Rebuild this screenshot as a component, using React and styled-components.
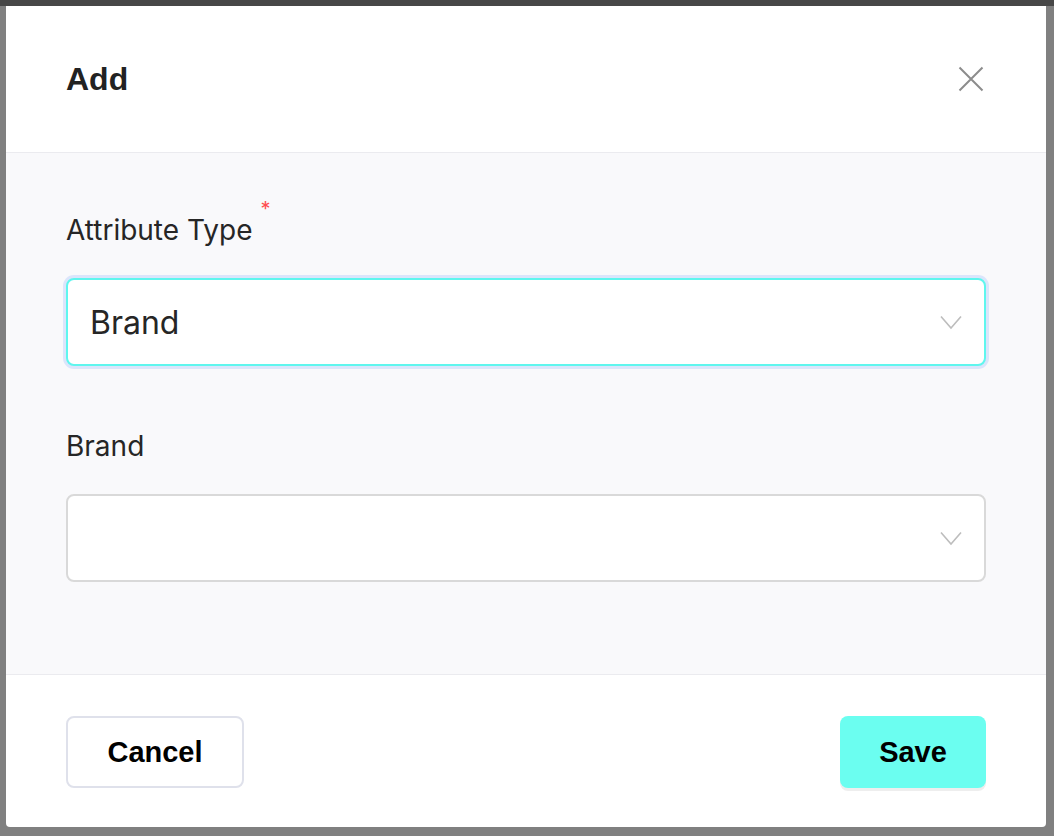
import React from 'react'
import styled, { createGlobalStyle } from 'styled-components'

const GlobalStyle = createGlobalStyle`
  html, body {
    margin: 0;
    padding: 0;
  }
  body {
    background: #808080;
    font-family: 'Inter', 'Noto Sans', sans-serif;
  }
`

export default function App() {
  return (
    <>
      <GlobalStyle />
      <Backdrop>
        <Modal>
          <Header>
            <Title>Add</Title>
            <CloseButton aria-label="Close">
              <svg width="26" height="26" viewBox="0 0 26 26">
                <path d="M1.5 1.5 L24.5 24.5 M24.5 1.5 L1.5 24.5" stroke="#8c8c8c" strokeWidth="2" fill="none" />
              </svg>
            </CloseButton>
          </Header>
          <Body>
            <Field>
              <Label>
                Attribute Type<Required>*</Required>
              </Label>
              <Select focused>
                <SelectValue>Brand</SelectValue>
                <Chevron />
              </Select>
            </Field>
            <Field>
              <Label>Brand</Label>
              <Select>
                <SelectValue />
                <Chevron />
              </Select>
            </Field>
          </Body>
          <Footer>
            <Button>Cancel</Button>
            <Button primary>Save</Button>
          </Footer>
        </Modal>
      </Backdrop>
    </>
  )
}

function Chevron() {
  return (
    <ChevronIcon width="22" height="15" viewBox="0 0 22 15">
      <polyline points="1,1.5 11,13 21,1.5" stroke="#bdbdbd" strokeWidth="1.6" fill="none" />
    </ChevronIcon>
  )
}

const Backdrop = styled.div`
  height: 100vh;
  box-sizing: border-box;
  padding: 6px 0 0 6px;
  background: linear-gradient(#474747 0, #474747 6px, #808080 6px);
`

const Modal = styled.div`
  width: 1040px;
  background: #ffffff;
  border-radius: 0 0 4px 4px;
  overflow: hidden;
  display: flex;
  flex-direction: column;
`

const Header = styled.div`
  height: 146px;
  padding: 0 62px 0 60px;
  display: flex;
  align-items: center;
  justify-content: space-between;
  border-bottom: 1px solid #ebebef;
`

const Title = styled.h2`
  margin: 0;
  font-family: 'Liberation Sans', Arial, sans-serif;
  font-weight: 700;
  font-size: 32px;
  color: #222222;
`

const CloseButton = styled.button`
  border: none;
  background: none;
  padding: 0;
  display: flex;
  cursor: pointer;
`

const Body = styled.div`
  background: #f9f9fb;
  padding: 57px 60px 92px;
  display: flex;
  flex-direction: column;
  gap: 60px;
  border-bottom: 1px solid #ebebef;
`

const Field = styled.div`
  display: flex;
  flex-direction: column;
  gap: 28px;
`

const Label = styled.label`
  height: 40px;
  font-size: 28px;
  line-height: 40px;
  color: #262626;
`

const Required = styled.span`
  position: relative;
  top: -24px;
  margin-left: 8px;
  font-size: 20px;
  line-height: 0;
  vertical-align: baseline;
  color: #ff4d4f;
`

const Select = styled.div`
  height: 88px;
  box-sizing: border-box;
  background: #ffffff;
  border: 2px solid ${p => (p.focused ? '#5ff6ee' : '#d9d9d9')};
  border-radius: 8px;
  box-shadow: ${p => (p.focused ? '0 0 0 3px #dbe5fb' : 'none')};
  padding: 0 22px 0 22px;
  display: flex;
  align-items: center;
  justify-content: space-between;
`

const SelectValue = styled.span`
  font-size: 32px;
  color: #262626;
`

const ChevronIcon = styled.svg`
  display: block;
`

const Footer = styled.div`
  height: 152px;
  box-sizing: border-box;
  padding: 41px 60px 0;
  display: flex;
  align-items: flex-start;
  justify-content: space-between;
`

const Button = styled.button`
  height: 72px;
  width: ${p => (p.primary ? '146px' : '178px')};
  box-sizing: border-box;
  border-radius: 8px;
  border: ${p => (p.primary ? 'none' : '2px solid #dfe1eb')};
  background: ${p => (p.primary ? '#6bfef0' : '#ffffff')};
  box-shadow: ${p => (p.primary ? '0 3px 0 #eeeeee' : 'none')};
  font-family: 'Liberation Sans', Arial, sans-serif;
  font-weight: 700;
  font-size: 29px;
  color: #000000;
  cursor: pointer;
`
